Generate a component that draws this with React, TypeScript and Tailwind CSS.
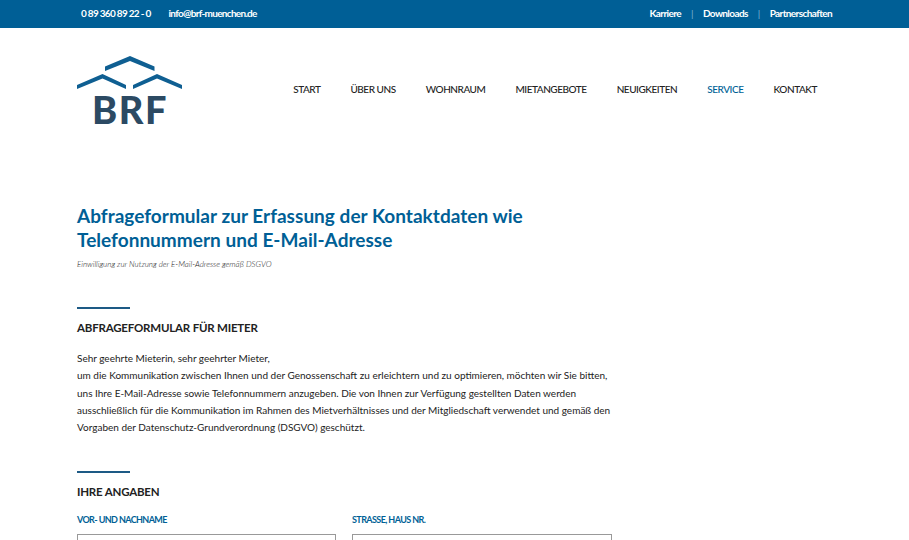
const navItems = ["START", "ÜBER UNS", "WOHNRAUM", "MIETANGEBOTE", "NEUIGKEITEN", "SERVICE", "KONTAKT"];

const Logo = () => {
  return (
    <div className="flex flex-col w-[106px]">
      <svg width="106" height="41" viewBox="0 0 106 41" className="block">
        <path d="M28 10.500 L53 0 L77.500 10.500 L77.500 15 L53 5 L28 15 Z" fill="#0f5f92" />
        <path d="M0 29 L25.500 18 L49 29 L49 33 L25.500 22.500 L0 33 Z" fill="#0f5f92" />
        <path d="M56 29 L80 18 L105 29 L105 33 L80 22.500 L56 33 Z" fill="#0f5f92" />
      </svg>
      <div className="text-[38px] leading-[38px] font-black text-[#2c4a63] text-center tracking-[1.5px] -mt-[7px]">BRF</div>
    </div>
  );
};

const TopBar = () => {
  return (
    <div className="h-7 bg-[#005f96] flex items-center justify-between pl-[81px] pr-[77px] pb-[1px] text-[10px] font-bold text-white tracking-[-0.6px]">
      <div className="flex gap-[18px] tracking-[-0.7px]">
        <span>0 89 360 89 22 - 0</span>
        <span>info@brf-muenchen.de</span>
      </div>
      <div className="flex items-center">
        <span>Karriere</span>
        <span className="mx-[10px] text-[#7fb3d3] font-normal">|</span>
        <span>Downloads</span>
        <span className="mx-[10px] text-[#7fb3d3] font-normal">|</span>
        <span>Partnerschaften</span>
      </div>
    </div>
  );
};

const Header = () => {
  return (
    <div className="flex justify-between pl-[77px] pr-[92px] pt-[28px] h-[139px]">
      <Logo />
      <div className="flex gap-[30px] pt-[26px] text-[10px] font-medium text-[#222] tracking-[-0.45px] h-fit">
        {navItems.map((item) => (
          <span key={item} className={item === "SERVICE" ? "text-[#005f96]" : ""}>
            {item}
          </span>
        ))}
      </div>
    </div>
  );
};

const Field = ({ label }: { label: string }) => {
  return (
    <div className="flex flex-col">
      <label className="text-[9px] font-bold text-[#005f96] tracking-[-0.6px] leading-[12px]">{label}</label>
      <div className="mt-[8px] h-[40px] border border-[#999] bg-white shrink-0" />
    </div>
  );
};

export default function App() {
  return (
    <div className="h-[540px] overflow-hidden bg-white font-['Lato',sans-serif]">
      <TopBar />
      <Header />
      <div className="pl-[77px] w-[640px]">
        <h1 className="text-[19px] leading-[24px] font-bold text-[#005f96] tracking-[0.03px] pt-[37px] w-[480px]">
          Abfrageformular zur Erfassung der Kontaktdaten wie Telefonnummern und E-Mail-Adresse
        </h1>
        <p className="text-[8px] italic font-light text-[#222] mt-[6px] leading-[12px]">
          Einwilligung zur Nutzung der E-Mail-Adresse gemäß DSGVO
        </p>
        <div className="w-[53px] h-[2px] bg-[#1d5a85] mt-[37px]" />
        <h2 className="text-[11.500px] font-bold text-[#222] tracking-[-0.2px] mt-[11px] leading-[16px]">ABFRAGEFORMULAR FÜR MIETER</h2>
        <p className="text-[10px] leading-[17.250px] text-[#222] mt-[14px] whitespace-nowrap">
          Sehr geehrte Mieterin, sehr geehrter Mieter,
          <br />
          um die Kommunikation zwischen Ihnen und der Genossenschaft zu erleichtern und zu optimieren, möchten wir Sie bitten,
          <br />
          uns Ihre E-Mail-Adresse sowie Telefonnummern anzugeben. Die von Ihnen zur Verfügung gestellten Daten werden
          <br />
          ausschließlich für die Kommunikation im Rahmen des Mietverhältnisses und der Mitgliedschaft verwendet und gemäß den
          <br />
          Vorgaben der Datenschutz-Grundverordnung (DSGVO) geschützt.
        </p>
        <div className="w-[53px] h-[2px] bg-[#1d5a85] mt-[35px]" />
        <h2 className="text-[11.500px] font-bold text-[#222] tracking-[-0.2px] mt-[11px] leading-[16px]">IHRE ANGABEN</h2>
        <div className="grid grid-cols-[259px_260px] gap-[16px] mt-[14px]">
          <Field label="VOR- UND NACHNAME" />
          <Field label="STRASSE, HAUS NR." />
        </div>
      </div>
    </div>
  );
}
